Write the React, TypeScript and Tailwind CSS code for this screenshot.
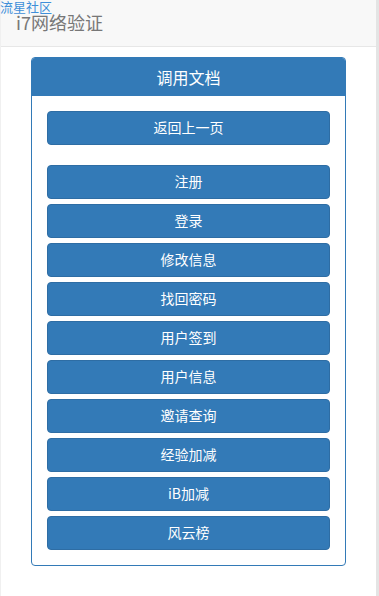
const FONT = '"Noto Sans CJK SC", "Liberation Sans", sans-serif';

const ITEMS = ['注册', '登录', '修改信息', '找回密码', '用户签到', '用户信息', '邀请查询', '经验加减', 'iB加减', '风云榜'];

export default function App() {
  return (
    <div className="relative min-h-[596px] bg-white" style={{ fontFamily: FONT }}>
      <div className="flex min-h-[596px] border-l border-[#f0f0f0]">
        <div className="flex-1">
          {/* Navbar */}
          <div className="flex h-[47px] items-center border-b border-[#e7e7e7] bg-[#f8f8f8] px-[15px] pb-[2px]">
            <span className="text-[18px] leading-[20px] text-[#777]">i7网络验证</span>
          </div>

          {/* Panel */}
          <div className="ml-[30px] mt-[10px] w-[315px] rounded-[4px] border border-[#337ab7]">
            <div className="flex h-[38px] items-center justify-center rounded-t-[3px] bg-[#337ab7] text-[16px] text-white">
              调用文档
            </div>
            <div className="p-[15px]">
              <DocButton label="返回上一页" />
              <div className="mt-[20px] flex flex-col gap-[5px]">
                {ITEMS.map((item) => (
                  <DocButton key={item} label={item} />
                ))}
              </div>
            </div>
          </div>
        </div>
        <div className="w-[3px] shrink-0 bg-[#e4e4e4]" />
      </div>

      <a className="absolute left-0 top-0 text-[13px] leading-[14px] text-[#3f8fd9]">流星社区</a>
    </div>
  );
}

function DocButton({ label }: { label: string }) {
  return (
    <div className="flex h-[34px] items-center justify-center rounded-[4px] border border-[#2e6da4] bg-[#337ab7] pb-[1px] text-[14px] text-white">
      {label}
    </div>
  );
}
